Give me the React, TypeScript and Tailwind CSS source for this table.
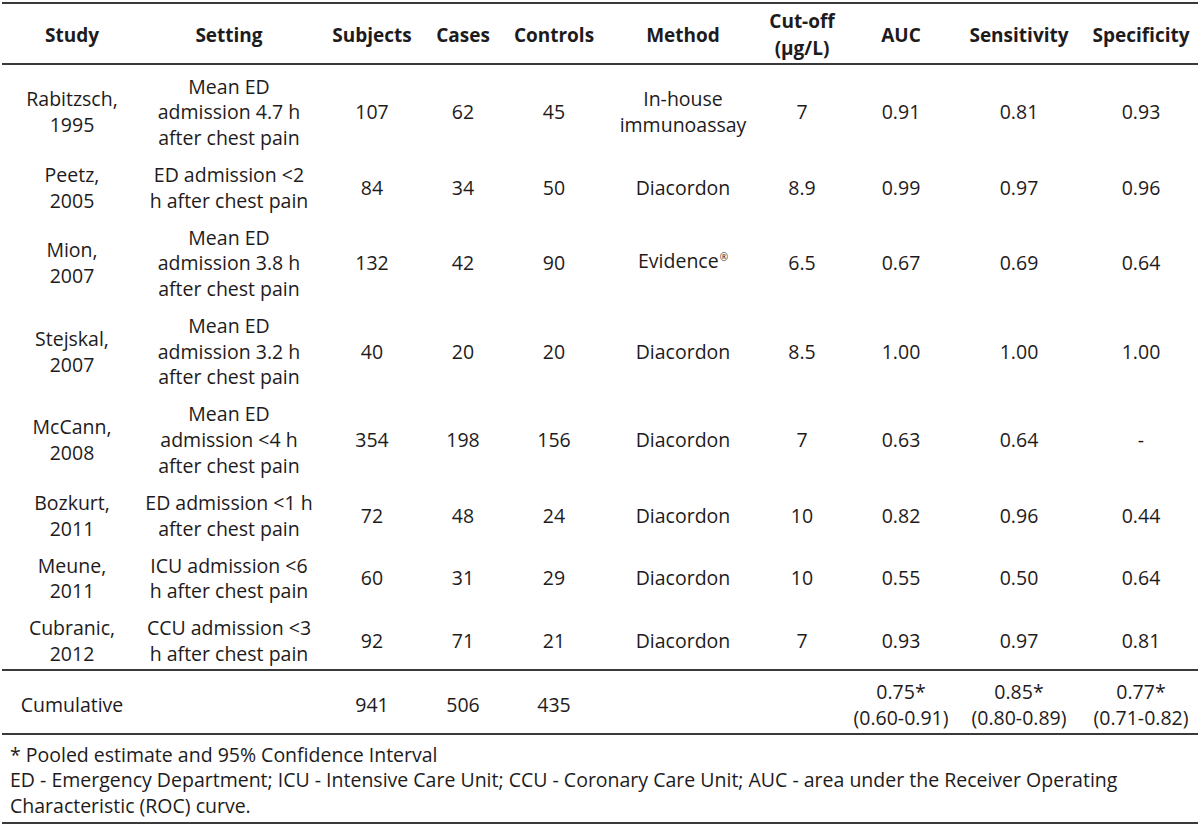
import React from "react";

type Cell = string[];

const rows: { cells: Cell[] }[] = [
	{ cells: [["Rabitzsch,", "1995"], ["Mean ED", "admission 4.7 h", "after chest pain"], ["107"], ["62"], ["45"], ["In-house", "immunoassay"], ["7"], ["0.91"], ["0.81"], ["0.93"]] },
	{ cells: [["Peetz,", "2005"], ["ED admission <2", "h after chest pain"], ["84"], ["34"], ["50"], ["Diacordon"], ["8.9"], ["0.99"], ["0.97"], ["0.96"]] },
	{ cells: [["Mion,", "2007"], ["Mean ED", "admission 3.8 h", "after chest pain"], ["132"], ["42"], ["90"], ["Evidence®"], ["6.5"], ["0.67"], ["0.69"], ["0.64"]] },
	{ cells: [["Stejskal,", "2007"], ["Mean ED", "admission 3.2 h", "after chest pain"], ["40"], ["20"], ["20"], ["Diacordon"], ["8.5"], ["1.00"], ["1.00"], ["1.00"]] },
	{ cells: [["McCann,", "2008"], ["Mean ED", "admission <4 h", "after chest pain"], ["354"], ["198"], ["156"], ["Diacordon"], ["7"], ["0.63"], ["0.64"], ["-"]] },
	{ cells: [["Bozkurt,", "2011"], ["ED admission <1 h", "after chest pain"], ["72"], ["48"], ["24"], ["Diacordon"], ["10"], ["0.82"], ["0.96"], ["0.44"]] },
	{ cells: [["Meune,", "2011"], ["ICU admission <6", "h after chest pain"], ["60"], ["31"], ["29"], ["Diacordon"], ["10"], ["0.55"], ["0.50"], ["0.64"]] },
	{ cells: [["Cubranic,", "2012"], ["CCU admission <3", "h after chest pain"], ["92"], ["71"], ["21"], ["Diacordon"], ["7"], ["0.93"], ["0.97"], ["0.81"]] },
];

const headers: Cell[] = [["Study"], ["Setting"], ["Subjects"], ["Cases"], ["Controls"], ["Method"], ["Cut-off", "(µg/L)"], ["AUC"], ["Sensitivity"], ["Specificity"]];

const cumulative: Cell[] = [["Cumulative"], [], ["941"], ["506"], ["435"], [], [], ["0.75*", "(0.60-0.91)"], ["0.85*", "(0.80-0.89)"], ["0.77*", "(0.71-0.82)"]];

const cols = "grid grid-cols-[140px_174px_112px_70px_112px_146px_92px_106px_130px_114px]";

// renders a line, lifting the ® mark
const Line = ({ text }: { text: string }) => {
	if (text.endsWith("®")) {
		return (
			<span className="block">
				{text.slice(0, -1)}
				<span className="text-[10px] relative -top-[7px] ml-[1px]">®</span>
			</span>
		);
	}
	return <span className="block">{text}</span>;
};

const CellBox = ({ lines }: { lines: Cell }) => (
	<div className="flex flex-col items-center justify-center text-center whitespace-nowrap">
		{lines.map((l, i) => (
			<Line key={i} text={l} />
		))}
	</div>
);

const App = () => {
	return (
		<div
			className="w-[1200px] h-[832px] bg-white text-[#1e1b1c] pt-[2px]"
			style={{ fontFamily: '"Open Sans", "Noto Sans", sans-serif' }}
		>
			<div className="ml-[2px] w-[1196px] border-t-2 border-[#3a3a3a]">
				<div className={`${cols} h-[61px] pt-[3px] font-bold text-[19px] leading-[27px] border-b-2 border-[#3a3a3a]`}>
					{headers.map((h, i) => (
						<CellBox key={i} lines={h} />
					))}
				</div>

				<div className="text-[19.5px] leading-[25.7px]">
					{rows.map((r, ri) => (
						<div key={ri} className={`${cols} pt-[8.5px] pb-[2.8px]`}>
							{r.cells.map((c, ci) => (
								<CellBox key={ci} lines={c} />
							))}
						</div>
					))}
				</div>

				<div className={`${cols} text-[19.5px] leading-[25.7px] pt-[7.5px] pb-[2.5px] border-t-2 border-b-2 border-[#3a3a3a]`}>
					{cumulative.map((c, ci) => (
						<CellBox key={ci} lines={c} />
					))}
				</div>

				<div className="pl-[8px] pt-[7px] pb-[3.5px] text-[19.5px] leading-[25.5px] border-b-2 border-[#3a3a3a]">
					<p>* Pooled estimate and 95% Confidence Interval</p>
					<p>
						ED - Emergency Department; ICU - Intensive Care Unit; CCU - Coronary Care Unit; AUC - area under the Receiver Operating
						<br />
						Characteristic (ROC) curve.
					</p>
				</div>
			</div>
		</div>
	);
};

export default App;
